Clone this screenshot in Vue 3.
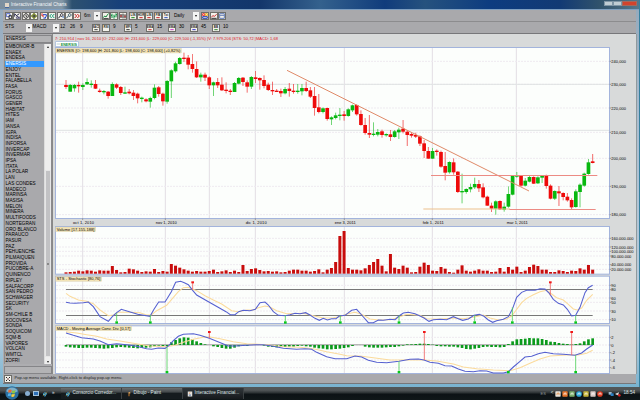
<script setup>
import { ref } from "vue";

const selected = ref("ENERSIS");
const symbols = [
  "EMBONOR-B", "ENAEX", "ENDESA", "ENERSIS", "ENJOY", "ENTEL", "FALABELLA", "FASA",
  "FORUS", "GASCO", "GENER", "HABITAT", "HITES", "IAM", "IANSA", "IGPA", "INDISA",
  "INFORSA", "INVERCAP", "INVERMAR", "IPSA", "ITATA", "LA POLAR", "LAN", "LAS CONDES",
  "MADECO", "MARINSA", "MASISA", "MELON", "MINERA", "MULTIFOODS", "NORTEGRAN",
  "ORO BLANCO", "PARAUCO", "PASUR", "PAZ", "PEHUENCHE", "PILMAIQUEN", "PROVIDA",
  "PUCOBRE-A", "QUINENCO", "RIPLEY", "SALFACORP", "SAN PEDRO", "SCHWAGER", "SECURITY",
  "SK", "SM-CHILE B", "SOCOVESA", "SONDA", "SOQUICOM", "SQM-B", "VAPORES", "VOLCAN",
  "WMTCL", "ZOFRI",
];

// toolbar icons: [path, color]
const fileTools = [
  [["M4 5h11v9H4z", "#5b6fd0"], ["M12 11h8v9h-8z", "#333"]],
  [["M5 5l14 14M5 5v9M19 5L9 12", "#335"], ["M10 15h10v4H10z", "#668"]],
  [["M12 5a7 7 0 1 0 .1 0M12 8v5l3 2", "#333"]],
  [["M12 6a6 6 0 1 0 .1 0M12 3v18M3 12h18", "#6a7a18"], ["M10 11h5v3h-5z", "#444"]],
];
const navTools = [
  [["M6 4v8h6", "#d22"], ["M9 8h10v4M19 12l-4 7M10 18h7", "#2340c8"]],
  [["M11 6l-6 6 6 6M19 6l-6 6 6 6", "#0a9a70"]],
  [["M14 5a4 4 0 1 0 .1 0M10 12l-6 7", "#223"], ["M16 15h5", "#26c"]],
  [["M14 5a4 4 0 1 0 .1 0M10 12l-6 7", "#356"]],
  [["M5 6l6 6-6 6M13 6l6 6-6 6", "#c31818"]],
];
const styleTools = [
  [["M4 17l4-5 4 3 5-8 3-2", "#178a3c"], ["M4 20h16", "#333"]],
  [["M6 5v13M12 8v12M18 4v12M3 10h3M12 13h3M18 8h3", "#0a9140"]],
  [["M6 6v12M12 5v14M18 7v12", "#222"], ["M6 9v6M18 11v5", "#c22"]],
];
const drawTools = [
  { t: "LIN", c: "#188818" },
  { t: "HOR", c: "#c22" },
  { t: "LIN", c: "#c22" },
  { t: "FIB", c: "#c22" },
  { t: "Txt", c: "#2850c0" },
];
const viewTools = [
  [["M5 5h6v6H5z", "#e33"], ["M13 5h6v6h-6z", "#e9b020"], ["M5 14h14v5H5z", "#2543b4"]],
  [["M4 15l5-4 4 2 7-6", "#c33"], ["M4 19h16", "#333"]],
  [["M5 5h14v14H5zM5 10h14", "#667fb8"]],
];
const params = [
  { v: "12" }, { v: "26" }, { v: "9" },
  { i: "MACD", c: "#444" }, { i: "RSI", c: "#f2f1ea" }, { v: "9" },
  { i: "MFI", c: "#333" }, { v: "5" },
  { i: "EMA", c: "#c33" }, { v: "15" },
  { i: "EMA", c: "#c3c" }, { v: "30" },
  { i: "EMA", c: "#33c" }, { v: "45" },
  { i: "BB", c: "#383" }, { v: "10" },
];

// Chart units are a third of a pixel
const STEP = 12.64;
const xAt = (i) => 48 + i * STEP;

// direction, body top, body bottom, high, low
const candles = `
r 135 141 120 147;g 135 155 132 155;g 135 145 132 155;r 135 138 125 158;g 135 141 130 150
g 126 133 115 135;g 131 133 121 143;r 132 146 120 147;r 152 156 146 158;g 153 156 150 163
r 155 168 153 176;g 132 168 127 168;r 133 143 130 147;r 141 159 138 165;g 157 161 140 162
r 155 160 147 163;r 158 168 150 180;r 161 175 158 190;g 173 177 170 187;r 178 184 175 187
g 174 185 170 203;g 143 174 133 178;r 142 162 138 170;r 161 184 158 197;g 123 185 120 191
g 91 124 88 174;g 70 94 65 98;g 54 72 51 74;r 53 56 38 66;r 53 74 45 88
r 72 87 42 98;r 87 112 64 114;g 104 112 98 125;r 104 113 98 123;r 112 136 109 147
g 127 136 125 168;r 126 136 114 144;r 134 151 112 153;r 149 153 127 160;r 152 156 147 165
g 129 156 126 156;g 114 131 111 133;r 113 126 111 138;r 127 140 121 158;g 111 140 108 147
r 112 117 93 129;r 114 121 112 149;r 120 138 106 145;r 134 150 128 153;r 150 154 125 165
r 152 156 147 155;r 153 160 146 171;g 147 160 141 163;r 146 153 129 170;r 152 156 132 161
g 152 155 132 161;g 144 154 132 166;r 144 153 125 156;r 151 170 141 174;r 168 204 141 227
r 202 216 162 220;g 205 216 202 220;r 204 237 203 242;g 232 238 229 255;g 226 234 218 238
g 224 228 204 241;r 223 228 213 242;g 208 228 205 230;g 196 211 194 216;r 195 223 193 227
r 222 255 211 257;r 255 279 234 284;r 279 284 225 294;g 281 285 247 289;g 276 284 267 289
r 274 285 269 293;g 282 285 280 290;r 283 291 270 303;g 274 291 270 293;g 269 277 263 297
r 266 275 240 280;r 275 285 271 318;r 282 287 277 293;r 285 290 278 294;r 289 311 286 318
r 310 333 300 354;r 333 356 321 356;g 333 356 324 356;r 332 336 328 347;r 336 380 332 383
r 378 398 336 421;g 366 397 364 401;r 367 397 355 404;r 395 456 393 459;g 453 456 401 490
g 447 456 445 461;g 441 448 431 457;g 432 442 413 447;r 432 445 420 456;r 442 472 430 475
r 470 497 467 497;r 497 506 488 516;g 484 506 481 524;r 483 508 481 510;g 500 509 488 515
g 462 500 439 503;g 408 464 405 466;g 406 409 396 413;r 407 437 405 440;g 422 437 414 439
g 411 425 407 427;r 411 431 409 432;g 412 430 409 432;g 408 413 407 429;r 407 438 404 446
r 437 476 433 478;g 453 476 451 480;r 454 460 438 498;r 459 471 457 481;r 470 481 459 485
r 480 502 475 508;g 454 501 448 503;g 434 456 430 502;g 401 437 398 440;g 367 402 357 404
r 364 369 342 370`
  .trim()
  .split(/[;\n]/)
  .map((row, i) => {
    const [dir, top, bottom, high, low] = row.split(" ");
    return { x: xAt(i), dir, top: +top, h: Math.max(4, bottom - top), high, low };
  });

const volume = [
  4, 5, 6, 9, 7, 10, 9, 6, 10, 9, 9, 23, 11, 4, 5, 15, 13, 9, 5, 7, 6, 14, 5, 8, 6, 29, 24, 18,
  13, 9, 6, 8, 6, 6, 8, 12, 5, 7, 10, 5, 9, 5, 26, 8, 14, 16, 11, 7, 8, 6, 7, 4, 5, 9, 12, 12,
  9, 9, 6, 8, 13, 4, 12, 17, 35, 113, 128, 17, 12, 12, 10, 16, 26, 35, 44, 24, 7, 59, 18, 14,
  24, 18, 4, 5, 21, 33, 26, 9, 8, 20, 15, 5, 3, 12, 25, 9, 6, 9, 13, 9, 9, 5, 6, 17, 6, 20, 12,
  21, 5, 9, 20, 27, 23, 12, 12, 5, 5, 10, 8, 5, 9, 8, 16, 12, 26, 12,
];
const histogram = [
  -5, -7, -8, -9, -9, -8, -8, -9, -10, -11, -10, -9, -7, -6, -7, -8, -9, -10, -9, -8, -7, -4,
  -2, -3, -4, 8, 15, 20, 23, 22, 17, 11, 6, 2, 0, -4, -6, -9, -11, -11, -8, -4, -3, -3, 0, 0, 1,
  -2, -5, -6, -7, -6, -6, -5, -5, -3, -2, -4, -5, -8, -10, -11, -13, -13, -12, -11, -9, -7, -3,
  0, 0, -5, -7, -8, -8, -8, -7, -6, -6, -4, -2, 2, 2, 3, 4, 4, 3, 1, -3, -4, -4, -5, -5, -7, -9,
  -12, -13, -11, -9, -6, -5, -6, -6, -7, -6, 3, 11, 17, 18, 19, 21, 20, 20, 18, 15, 10, 9, 6, 4,
  3, 1, 3, 5, 11, 17, 20,
];

const stsFast =
  "48,247 60,249 75,250 100,248 115,246 130,260 150,290 175,304 187,290 200,278 214,268 238,275 263,283 300,289 312,268 326,246 345,246 352,235 364,215 377,187 392,184 403,188 415,194 428,211 440,225 478,247 515,268 528,275 541,284 555,284 566,275 580,271 600,272 616,268 630,248 645,246 655,255 670,275 685,286 706,287 720,284 735,280 750,281 767,278 780,285 795,295 808,301 820,295 832,300 845,296 858,296 868,288 885,286 905,271 920,268 935,285 955,308 970,308 985,300 1000,301 1020,298 1035,299 1047,288 1060,279 1075,277 1095,281 1110,288 1122,294 1137,304 1150,299 1170,298 1190,299 1210,290 1225,296 1238,301 1255,297 1272,286 1288,283 1302,289 1315,300 1328,307 1340,302 1360,298 1375,290 1387,268 1400,232 1415,217 1430,211 1455,211 1470,206 1485,207 1498,220 1510,238 1525,250 1540,255 1552,268 1565,288 1577,286 1590,262 1605,218 1615,203 1628,196";
const stsSlow =
  "48,220 60,229 85,240 110,244 130,251 150,270 175,287 190,285 205,277 240,277 270,278 290,285 305,284 320,272 350,256 365,238 385,215 400,203 415,202 440,212 465,227 490,240 515,252 545,272 565,275 590,270 610,270 625,263 645,258 660,261 680,272 710,281 760,280 790,287 820,294 850,293 870,290 890,282 915,277 935,283 960,297 985,300 1020,299 1040,294 1070,283 1110,286 1130,296 1170,297 1215,294 1240,296 1270,292 1300,285 1320,294 1345,300 1370,297 1385,288 1400,268 1415,248 1430,235 1450,224 1470,215 1490,211 1505,222 1520,233 1540,240 1555,253 1570,267 1582,270 1595,264 1610,241 1628,223";
const macdFast =
  "48,339 70,346 95,353 130,357 150,363 175,374 200,371 230,374 260,379 290,386 305,388 325,384 345,385 357,376 370,362 385,349 400,343 430,341 450,346 478,355 500,364 515,370 535,378 555,378 590,376 620,374 640,374 670,379 700,385 740,388 765,386 785,388 800,397 830,410 855,416 890,416 915,408 935,411 955,421 980,427 1010,428 1047,424 1080,418 1105,417 1122,420 1140,427 1165,430 1185,437 1205,438 1225,447 1245,454 1270,455 1290,452 1310,453 1330,459 1360,459 1375,455 1390,441 1410,424 1425,411 1445,409 1465,401 1485,397 1510,401 1540,403 1575,406 1595,399 1610,387 1628,375";
const macdSlow =
  "48,335 80,339 110,344 140,349 170,357 210,363 250,370 300,378 350,380 375,376 400,367 430,358 460,352 480,351 510,356 550,365 590,371 650,374 700,380 750,382 790,386 830,395 870,403 890,407 930,408 970,413 1020,420 1120,420 1160,423 1210,432 1240,441 1280,446 1330,450 1380,452 1410,443 1440,430 1470,417 1500,408 1550,405 1585,405 1610,400 1628,391";

const months = [
  { x: 98, t: "oct 1, 2010" },
  { x: 346, t: "nov 1, 2010" },
  { x: 616, t: "dic 1, 2010" },
  { x: 883, t: "ene 3, 2011" },
  { x: 1147, t: "feb 1, 2011" },
  { x: 1399, t: "mar 1, 2011" },
];
const gridX = [98, 346, 478, 616, 883, 1147, 1399];
const prices = [
  [64, "240,000"], [133, "230,000"], [204, "220,000"], [277, "210,000"],
  [355, "200,000"], [439, "190,000"], [524, "180,000"],
];
const volumeTicks = [
  [55, "160.000.000"], [81, "120.000.000"], [94, "100.000.000"],
  [108, "80.000.000"], [134, "40.000.000"], [148, "20.000.000"],
];
const stsTicks = [[196, "90"], [209, "80"], [234, "60"], [247, "50"], [273, "30"], [299, "10"]];
const macdTicks = [[352, "2"], [375, "0"], [398, "-2"], [420, "-4"], [443, "-6"]];

// [x, y where the stem meets the curve]
const stsBuy = [[200, 280], [301, 285], [706, 285], [871, 287], [1047, 287], [1274, 285], [1387, 262], [1577, 286]];
const stsSell = [[428, 210], [1501, 226]];
const macdBuy = [[351, 381], [1047, 424], [1375, 452], [1577, 406]];
const macdSell = [[478, 355], [1123, 420], [1565, 405]];

const tasks = [
  { t: "Consorcio Corredor...", k: "ie" },
  { t: "Dibujo - Paint", k: "paint" },
  { t: "Interactive Financial...", k: "java" },
];
const tray = ["#e8e4dc", "#e8742a", "#7cae6a", "#2aa6d8", "#c5b438", "#d8c8c4", "#dd3b20"];
</script>

<template>
  <div class="desktop">
    <div class="window">
      <header class="title">
        <span class="cup"></span>
        <span class="title-text">Interactive Financial Charts</span>
        <div class="controls"><i></i><i></i><i class="close"></i></div>
      </header>

      <div class="toolbar tools">
        <div class="group g1">
          <svg v-for="(ic, n) in fileTools" :key="n" class="btn" viewBox="3 3 18 18">
            <path v-for="(p, k) in ic" :key="k" :d="p[0]" :stroke="p[1]" />
          </svg>
        </div>
        <div class="group g2">
          <svg v-for="(ic, n) in navTools" :key="n" class="btn" viewBox="3 3 18 18">
            <path v-for="(p, k) in ic" :key="k" :d="p[0]" :stroke="p[1]" />
          </svg>
        </div>
        <div class="combo c1"><span>6m</span><b></b></div>
        <div class="group g3">
          <svg v-for="(ic, n) in styleTools" :key="n" class="btn" viewBox="3 3 18 18">
            <path v-for="(p, k) in ic" :key="k" :d="p[0]" :stroke="p[1]" />
          </svg>
        </div>
        <div class="group g4">
          <svg v-for="(b, n) in drawTools" :key="n" class="btn" viewBox="3 3 18 18">
            <text x="12" y="12" text-anchor="middle">{{ b.t }}</text>
            <path d="M7 17h10" :stroke="b.c" />
          </svg>
        </div>
        <div class="combo c2"><span>Daily</span><b></b></div>
        <div class="group">
          <svg v-for="(ic, n) in viewTools" :key="n" class="btn" viewBox="3 3 18 18">
            <path v-for="(p, k) in ic" :key="k" :d="p[0]" :stroke="p[1]" />
          </svg>
        </div>
      </div>

      <div class="toolbar params">
        <div class="combo"><span>STS</span><b></b></div>
        <div class="combo"><span>MACD</span><b></b></div>
        <template v-for="(p, n) in params" :key="n">
          <span v-if="p.v" class="field">{{ p.v }}</span>
          <svg v-else class="btn" viewBox="3 3 18 18">
            <text x="12" y="12" text-anchor="middle">{{ p.i }}</text>
            <path d="M7 17h10" :stroke="p.c" />
          </svg>
        </template>
      </div>

      <main class="body">
        <aside class="side">
          <div class="search">{{ selected }}</div>
          <div class="list">
            <ul>
              <li
                v-for="s in symbols"
                :key="s"
                :class="{ on: s === selected }"
                @click="selected = s"
              >
                {{ s }}
              </li>
            </ul>
            <div class="scroll">
              <i class="up"></i>
              <div class="thumb"></div>
              <i class="down"></i>
            </div>
          </div>
          <div class="blank"></div>
        </aside>

        <section class="charts">
          <svg class="head" viewBox="15 -18 1743 39">
            <text class="quote" x="15" y="0" textLength="669">7: 210,914 | nov 16, 2010 |O: 232,000 |H: 231,600 |L: 229,000 |C: 229,500 (-1,35%) |V: 7.979.206 |STS: 50,72 |MACD: 1,68</text>
            <rect class="legend" x="17" y="5" width="68" height="15" />
            <path d="M20 12h10" stroke="#9bb" stroke-width="2" />
            <text class="legend-text" x="32" y="17" textLength="49">ENERSIS</text>
          </svg>

          <svg class="main" viewBox="15 21 1743 537">
            <rect class="panel" x="16.5" y="22.5" width="1662" height="513" />
            <path v-for="x in gridX" :key="x" class="grid-v" :d="`M${x} 24V534`" />
            <path v-for="p in prices" :key="p[0]" class="grid-h" :d="`M18 ${p[0]}H1677`" />
            <path class="grid-solid" d="M18 133H1677M18 271H1677" />
            <g v-for="(c, i) in candles" :key="i" :class="c.dir">
              <path class="wick" :d="`M${c.x} ${c.high}V${c.low}`" />
              <rect :x="c.x - 5.5" :y="c.top" width="11" :height="c.h" />
            </g>
            <path class="trend" d="M711 91L1437 453" />
            <path class="level" d="M1143 406.5H1642M1378 508.5H1637" />
            <path class="level base" d="M1120 507H1380" />
            <rect class="tag" x="17" y="25" width="377" height="14" />
            <text x="20" y="35.5" textLength="371">ENERSIS [O: 198,600 |H: 201,800 |L: 198,600 |C: 198,600] (+0,82%)</text>
            <g v-for="p in prices" :key="p[1]">
              <path class="tick" :d="`M1679 ${p[0]}h5`" />
              <text x="1684" :y="p[0] + 5" textLength="44">{{ p[1] }}</text>
            </g>
            <text v-for="m in months" :key="m.t" :x="m.x - 29" y="551" textLength="63">{{ m.t }}</text>
            <path v-for="m in months" :key="m.x" class="tick" :d="`M${m.x} 535v5`" />
          </svg>

          <svg class="vol" viewBox="15 18 1743 147">
            <rect class="panel" x="16.5" y="19.5" width="1662" height="143" />
            <path v-for="x in gridX" :key="x" class="grid-v" :d="`M${x} 21V161`" />
            <path v-for="p in volumeTicks" :key="p[0]" class="grid-h" :d="`M18 ${p[0]}H1677`" />
            <rect
              v-for="(v, i) in volume"
              :key="i"
              class="bar"
              :x="xAt(i) - 4.5"
              :y="161 - v"
              width="9"
              :height="v"
            />
            <rect class="tag" x="17" y="21" width="120" height="14" />
            <text x="20" y="31.5" textLength="113">Volume [17.155.188]</text>
            <g v-for="p in volumeTicks" :key="p[1]">
              <path class="tick" :d="`M1679 ${p[0]}h5`" />
              <text x="1684" :y="p[0] + 5">{{ p[1] }}</text>
            </g>
          </svg>

          <svg class="sts" viewBox="15 165 1743 150">
            <rect class="panel" x="16.5" y="168.5" width="1662" height="142" />
            <path v-for="x in gridX" :key="x" class="grid-v" :d="`M${x} 170V309`" />
            <path v-for="p in stsTicks" :key="p[0]" class="grid-h" :d="`M18 ${p[0]}H1677`" />
            <path class="limit" d="M48 208.5H1628M48 286.5H1628" />
            <polyline class="slow" :points="stsSlow" />
            <polyline class="fast" :points="stsFast" />
            <g v-for="s in stsBuy" :key="s[0]" class="buy">
              <path :d="`M${s[0]} ${s[1]}V304`" />
              <rect :x="s[0] - 4" y="304" width="8" height="7" />
            </g>
            <g v-for="s in stsSell" :key="s[0]" class="sell">
              <path :d="`M${s[0]} 188V${s[1]}`" />
              <rect :x="s[0] - 4" y="184" width="8" height="6" />
            </g>
            <rect class="tag" x="17" y="170" width="138" height="14" />
            <text x="20" y="180.5" textLength="131">STS - Stochastic [80,76]</text>
            <g v-for="p in stsTicks" :key="p[1]">
              <path class="tick" :d="`M1679 ${p[0]}h5`" />
              <text x="1684" :y="p[0] + 5">{{ p[1] }}</text>
            </g>
          </svg>

          <svg class="macd" viewBox="15 315 1743 147">
            <rect class="panel" x="16.5" y="317.5" width="1662" height="143" />
            <path v-for="x in gridX" :key="x" class="grid-v" :d="`M${x} 319V459`" />
            <path v-for="p in macdTicks" :key="p[0]" class="grid-h" :d="`M18 ${p[0]}H1677`" />
            <path class="zero" d="M48 374.5H1628" />
            <rect
              v-for="(v, i) in histogram"
              :key="i"
              class="hist"
              :x="xAt(i) - 4"
              :y="v > 0 ? 375 - v : 375"
              width="8"
              :height="Math.abs(v)"
            />
            <polyline class="slow" :points="macdSlow" />
            <polyline class="fast" :points="macdFast" />
            <g v-for="s in macdBuy" :key="s[0]" class="buy">
              <path :d="`M${s[0]} ${s[1]}V454`" />
              <rect :x="s[0] - 4" y="453" width="8" height="7" />
            </g>
            <g v-for="s in macdSell" :key="s[0]" class="sell">
              <path :d="`M${s[0]} 337V${s[1]}`" />
              <rect :x="s[0] - 4" y="333" width="8" height="6" />
            </g>
            <rect class="tag" x="17" y="318" width="228" height="14" />
            <text x="20" y="328.5" textLength="221">MACD - Moving Average Conv. Div. [0,17]</text>
            <g v-for="p in macdTicks" :key="p[1]">
              <path class="tick" :d="`M1679 ${p[0]}h5`" />
              <text x="1684" :y="p[0] + 5">{{ p[1] }}</text>
            </g>
          </svg>
        </section>
      </main>

      <footer class="status">
        <svg class="btn" viewBox="3 3 18 18">
          <path d="M6 6l4 4M18 6l-4 4M6 18l4-4M18 18l-4-4" stroke="#222" />
          <path d="M11 12h2" stroke="#c33" />
        </svg>
        <span>Pop-up menu available. Right-click to display pop-up menu.</span>
      </footer>
    </div>

    <nav class="taskbar">
      <svg class="orb" viewBox="0 0 48 48">
        <circle cx="24" cy="24" r="23" fill="#2c6f9e" />
        <path d="M4 18a22 22 0 0 1 40 0c-12 7-28 7-40 0z" fill="#7fb0c8" />
        <path d="M12 14q6-4 11 0l-2 9q-5-3-10 0z" fill="#ee6a30" />
        <path d="M25 15q6 3 11-1l-2 9q-5 4-11 1z" fill="#8cc63e" />
        <path d="M11 26q5-3 10 0l-2 9q-5-3-10 0z" fill="#56b4ec" />
        <path d="M23 27q6 3 11-1l-2 9q-5 4-11 1z" fill="#fbd13a" />
      </svg>
      <div class="quick">
        <i class="dot"></i>
        <i class="screens"></i>
        <svg class="e" viewBox="0 0 24 24">
          <path d="M5 13h13a6 6 0 1 0-2 5" stroke="#45b5f0" stroke-width="4" fill="none" />
          <path d="M3 19Q12 14 21 4" stroke="#efb62c" stroke-width="2" fill="none" />
        </svg>
        <span class="more">»</span>
      </div>
      <div
        v-for="t in tasks"
        :key="t.t"
        class="task"
        :class="t.k"
      >
        <svg v-if="t.k === 'ie'" class="e" viewBox="0 0 24 24">
          <path d="M5 13h13a6 6 0 1 0-2 5" stroke="#45b5f0" stroke-width="4" fill="none" />
          <path d="M3 19Q12 14 21 4" stroke="#efb62c" stroke-width="2" fill="none" />
        </svg>
        <svg v-else-if="t.k === 'paint'" class="e" viewBox="0 0 24 24">
          <path d="M12 21V9" stroke="#c87c28" stroke-width="4" />
          <path d="M6 8L17 3v8z" fill="#e0a860" />
        </svg>
        <svg v-else class="e" viewBox="0 0 24 24">
          <path d="M3 2h18v20H3z" fill="#e4e2dc" />
          <path d="M12 5q-4 4 0 8" stroke="#e06a20" stroke-width="2" fill="none" />
          <path d="M7 15h9M8 18h8" stroke="#4a70a8" stroke-width="2" />
        </svg>
        <span>{{ t.t }}</span>
      </div>
      <div class="tray">
        <span class="lang">ES</span>
        <span class="chev">&lt;</span>
        <svg v-for="(c, n) in tray" :key="n" class="t" viewBox="0 0 18 18">
          <circle v-if="n === 3 || n === 6" cx="9" cy="9" r="8.5" :fill="c" />
          <rect v-else x="1" y="1" width="16" height="16" rx="2" :fill="c" />
          <path d="M6 12V7l6-1v6" :stroke="n === 0 ? '#e08030' : '#fff'" stroke-width="2" fill="none" />
        </svg>
        <svg class="t net" viewBox="0 0 18 18">
          <path d="M2 3h9v8H2z" fill="#9ab8cc" />
          <path d="M8 7h9v8H8z" fill="#2b7fc4" />
        </svg>
        <svg class="t" viewBox="0 0 18 18">
          <path d="M2 7h4l5-4v12l-5-4H2z" fill="#ddd" />
          <circle cx="13" cy="13" r="4" fill="#d02020" />
        </svg>
        <span class="clock">18:54</span>
      </div>
    </nav>
  </div>
</template>

<style>
body {
  overflow: hidden;
  background: #15191c;
}
</style>

<style scoped>
* {
  box-sizing: border-box;
}
.desktop {
  width: 640px;
  height: 400px;
  display: flex;
  flex-direction: column;
  font-family: "Liberation Sans", Arial, sans-serif;
  font-size: 4.7px;
  line-height: 1;
  color: #000;
}
.window {
  height: 387px;
  display: flex;
  flex-direction: column;
  padding: 0 3px 3px 3px;
  background: linear-gradient(#94a9bc, #a9bdd0 30%, #b9cede 85%, #79b3d0);
  border-right: 1px solid #35809f;
}
.title {
  height: 10px;
  flex: none;
  margin: 0 -3px;
  padding: 1px 2px 0 5px;
  display: flex;
  align-items: center;
  border-bottom: 1px solid #7f9fc0;
  background: linear-gradient(90deg, #7d8f9f 0, #8497a6 62px, #2d5170 72px, #17407a 120px, #13366b 260px, #34618d 320px, #103c7c 385px, #26527e 425px, #0d3c80 490px, #123a74 560px, #31536c 600px, #57788c 640px);
}
.cup {
  width: 4px;
  height: 5px;
  background: #e2d6c8;
  border-bottom: 1px solid #4668a0;
}
.title-text {
  margin-left: 2px;
  font-size: 4.6px;
  color: #f3f6f8;
  white-space: nowrap;
}
.controls {
  display: flex;
  align-self: flex-start;
  margin-left: auto;
}
.controls i {
  width: 9px;
  height: 5px;
  border: 1px solid #7f96a6;
  background: #c0cdd4;
}
.controls .close {
  width: 15px;
  background: #d2432d;
  border-color: #a5685c;
}
.toolbar {
  height: 12px;
  flex: none;
  align-items: center;
  background: #a9a9ac;
  border-bottom: 1px solid #8c8c8e;
}
.tools {
  display: flex;
  padding: 1px 0 0 2px;
}
.params {
  display: grid;
  grid-template-columns: 27.5px 27.5px 10px 10px 13px 10px 10px 12px 10px 12px 10px 12px 10px 12px 10px 12px 10px 12px;
  padding-left: 1px;
  border-bottom: 1px solid #77777a;
}
.group {
  display: flex;
  gap: 0.35px;
}
.g1 { margin-right: 2px; }
.g2 { margin-right: 1.5px; }
.g3 { margin-right: 2px; }
.g4 { margin-right: 3px; }
.btn {
  width: 8px;
  height: 8px;
  flex: none;
  background: #f2f1ea;
  border: 1px solid #6f6f6a;
  stroke-width: 3;
  fill: none;
}
.btn text {
  font-size: 9px;
  font-weight: bold;
  fill: #222;
}
.combo {
  height: 8px;
  display: flex;
  align-items: center;
  justify-content: space-between;
  padding-left: 1px;
}
.c1 {
  width: 17px;
  margin-right: 2px;
}
.c2 {
  width: 26px;
  margin-right: 2.5px;
}
.combo b {
  width: 6px;
  height: 8px;
  display: flex;
  align-items: center;
  justify-content: center;
  background: #f4f4f4;
}
.combo b::after {
  content: "";
  border: 1.3px solid transparent;
  border-top: 2px solid #111;
  border-bottom: 0;
}
.field {
  padding-left: 1px;
}
.body {
  height: 340px;
  flex: none;
  display: flex;
  background: #d8dada;
}
.side {
  width: 49px;
  flex: none;
  display: flex;
  flex-direction: column;
  background: #adadb0;
  padding: 0.5px 0 0 1px;
}
.search {
  height: 8px;
  line-height: 6px;
  padding-left: 1px;
  border: 1px solid #858588;
  background: #b3b3b5;
  font-size: 4.5px;
}
.list {
  height: 321px;
  margin-top: 0.5px;
  display: flex;
  border: 1px solid #8b8b8e;
  border-bottom: 0;
  background: #a9a9ac;
}
.list ul {
  flex: 1;
  list-style: none;
  margin: 0;
  padding: 0;
}
.list li {
  height: 5.71px;
  line-height: 5.9px;
  padding-left: 0.5px;
  white-space: nowrap;
}
.list li.on {
  background: #3399ff;
  color: #fff;
}
.scroll {
  width: 7px;
  display: flex;
  flex-direction: column;
  align-items: center;
  background: #eeeeee;
  border-left: 1px solid #ddd;
}
.scroll .up,
.scroll .down {
  width: 0;
  height: 0;
  border: 1.5px solid transparent;
}
.scroll .up {
  margin: 2px 0 122px;
  border-bottom: 2px solid #222;
  border-top: 0;
}
.thumb {
  width: 6px;
  height: 187px;
  display: flex;
  align-items: center;
  justify-content: center;
  background: #c2c2c4;
  border: 1px solid #e6e6e6;
}
.thumb::after {
  content: "";
  width: 2px;
  height: 2px;
  background: #888;
}
.scroll .down {
  margin-top: 4px;
  border-top: 2px solid #222;
  border-bottom: 0;
}
.blank {
  height: 8px;
  margin-top: 1.5px;
  background: #b3b3b5;
  border: 1px solid #858588;
}
.charts {
  width: 585px;
  flex: none;
  display: flex;
  flex-direction: column;
  padding-left: 2px;
  border-left: 1px solid #888;
  border-right: 1px solid #8f9a9e;
}
.charts svg {
  width: 581px;
  flex: none;
  display: block;
}
.charts text {
  font-size: 12px;
  fill: #000;
}
.head { height: 13px; }
.main { height: 179px; }
.vol { height: 49px; }
.sts { height: 50px; }
.macd { height: 49px; }
.charts .quote {
  font-size: 12px;
  fill: #e0161c;
}
.charts .legend-text {
  font-weight: bold;
  font-size: 11px;
  fill: #14913c;
}
.legend {
  fill: #fff;
  stroke: #9db7dc;
  stroke-width: 2;
}
.panel {
  fill: #fcfefc;
  stroke: #a3b4dc;
  stroke-width: 3;
}
.grid-v {
  stroke: #e2dee4;
  stroke-width: 3;
}
.grid-h {
  stroke: #eeeaf0;
  stroke-width: 3;
  stroke-dasharray: 6 3;
}
.grid-solid {
  stroke: #dfe2e2;
  stroke-width: 3;
}
.r { fill: #ee0a0a; stroke: #ee0a0a; }
.g { fill: #08b810; stroke: #08b810; }
.charts g.r rect,
.charts g.g rect { stroke: none; }
.wick { stroke-width: 2.4; opacity: 0.75; }
.trend {
  stroke: #e08a68;
  stroke-width: 3;
}
.level {
  stroke: #ec8b84;
  stroke-width: 3;
}
.base { stroke: #ecc08c; }
.tag {
  fill: #f3e4b6;
  stroke: #cfc7a8;
  stroke-width: 1;
}
.tick {
  stroke: #777;
  stroke-width: 2;
}
.bar { fill: #c80c0c; }
.hist { fill: #0b9a1c; }
.limit {
  stroke: #777;
  stroke-width: 3;
}
.zero {
  stroke: #999;
  stroke-width: 3;
}
.fast,
.slow {
  fill: none;
  stroke: #5560d0;
  stroke-width: 3.2;
}
.slow { stroke: #fbdb9c; }
.buy { fill: #08c818; stroke: #50cf5c; stroke-width: 2.5; }
.sell { fill: #f01818; stroke: #f06464; stroke-width: 2.5; }
.buy rect,
.sell rect { stroke: none; }
.status {
  height: 10px;
  flex: none;
  display: flex;
  align-items: center;
  gap: 2.5px;
  padding-left: 1px;
  background: #a9a9ac;
  border-bottom: 1px solid #77777a;
  font-size: 4.1px;
  color: #222;
}
.taskbar {
  height: 13px;
  display: flex;
  align-items: center;
  background: linear-gradient(#525759, #505557 25%, #2c3234 45%, #0c1215 55%, #101719);
  color: #dfe4e6;
  font-size: 4.6px;
}
.orb {
  width: 14px;
  height: 14px;
  margin: -1px 0 0 5px;
}
.quick {
  width: 42px;
  padding-left: 6px;
  display: flex;
  align-items: center;
  gap: 3px;
}
.dot {
  width: 5px;
  height: 5px;
  border-radius: 50%;
  background: #86add0;
}
.screens {
  width: 6px;
  height: 5px;
  background: #2e71b8;
  border: 1px solid #a5c5dc;
}
.e {
  width: 6px;
  height: 6px;
  flex: none;
}
.more {
  align-self: flex-start;
  margin-left: 1px;
}
.task {
  width: 61px;
  height: 11px;
  display: flex;
  align-items: center;
  gap: 1.5px;
  padding-left: 4px;
  white-space: nowrap;
  border-right: 1px solid #3a4042;
  background: linear-gradient(#6b7072, #464b4d 35%, #151b1e 50%);
}
.task.java {
  background: linear-gradient(#30363a, #15191c);
}
.tray {
  display: flex;
  align-items: center;
  gap: 1px;
  margin-left: auto;
  padding-right: 5px;
}
.lang {
  margin-right: 4px;
  font-size: 4px;
  color: #8f9698;
}
.t {
  width: 6px;
  height: 6px;
}
.net { margin-left: 4px; }
.clock { margin-left: 2px; }
</style>
